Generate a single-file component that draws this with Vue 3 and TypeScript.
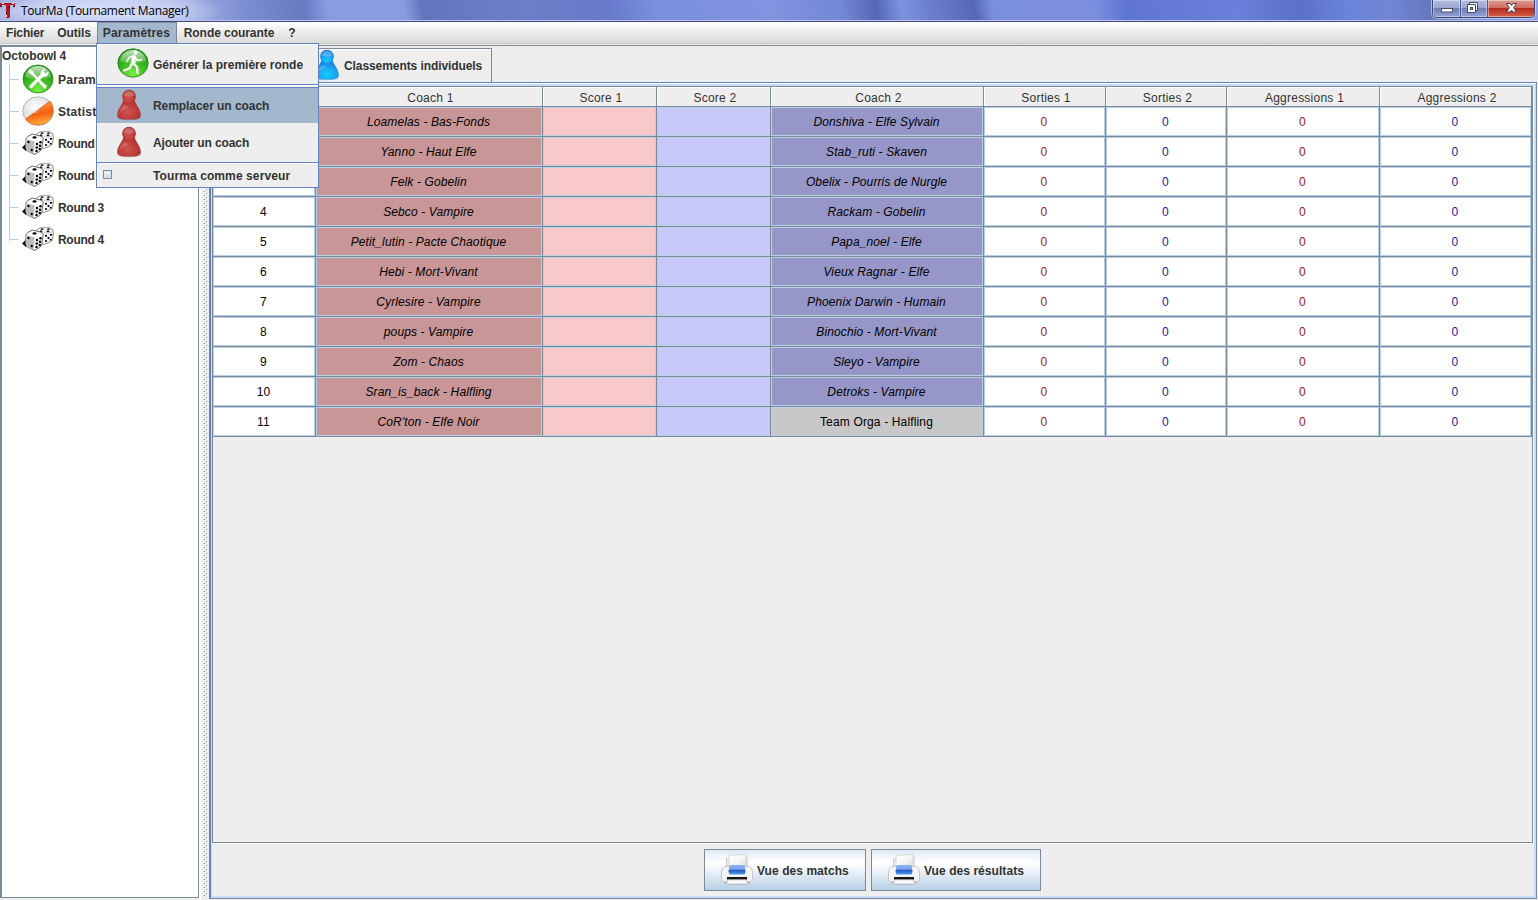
<script setup lang="ts">
interface Match {
  home: string
  away: string
  bye?: boolean
}

const menus: string[] = ['Fichier', 'Outils', 'Paramètres', 'Ronde courante', '?']
const headers: string[] = ['', 'Coach 1', 'Score 1', 'Score 2', 'Coach 2', 'Sorties 1', 'Sorties 2', 'Aggressions 1', 'Aggressions 2']
const rounds: string[] = ['Round 1', 'Round 2', 'Round 3', 'Round 4']
const printButtons: string[] = ['Vue des matchs', 'Vue des résultats']

const matches: Match[] = [
  { home: 'Loamelas - Bas-Fonds', away: 'Donshiva - Elfe Sylvain' },
  { home: 'Yanno - Haut Elfe', away: 'Stab_ruti - Skaven' },
  { home: 'Felk - Gobelin', away: 'Obelix - Pourris de Nurgle' },
  { home: 'Sebco - Vampire', away: 'Rackam - Gobelin' },
  { home: 'Petit_lutin - Pacte Chaotique', away: 'Papa_noel - Elfe' },
  { home: 'Hebi - Mort-Vivant', away: 'Vieux Ragnar - Elfe' },
  { home: 'Cyrlesire - Vampire', away: 'Phoenix Darwin - Humain' },
  { home: 'poups - Vampire', away: 'Binochio - Mort-Vivant' },
  { home: 'Zom - Chaos', away: 'Sleyo - Vampire' },
  { home: 'Sran_is_back - Halfling', away: 'Detroks - Vampire' },
  { home: "CoR'ton - Elfe Noir", away: 'Team Orga - Halfling', bye: true },
]
</script>

<template>
  <div class="window">
    <svg class="defs" width="0" height="0" aria-hidden="true">
      <defs>
        <radialGradient id="gGreen" cx="50%" cy="88%" r="85%">
          <stop offset="0" stop-color="#7df04a" />
          <stop offset="0.45" stop-color="#3fbf22" />
          <stop offset="1" stop-color="#178a12" />
        </radialGradient>
        <linearGradient id="gGloss" x1="0" y1="0" x2="0" y2="1">
          <stop offset="0" stop-color="#fff" stop-opacity="0.75" />
          <stop offset="1" stop-color="#fff" stop-opacity="0.15" />
        </linearGradient>
        <linearGradient id="gOrange" x1="0.3" y1="0" x2="0.5" y2="1">
          <stop offset="0" stop-color="#ff9a50" />
          <stop offset="0.55" stop-color="#f2600f" />
          <stop offset="1" stop-color="#ffb040" />
        </linearGradient>
        <radialGradient id="gSilver" cx="45%" cy="35%" r="70%">
          <stop offset="0" stop-color="#fff" />
          <stop offset="1" stop-color="#d2d2d2" />
        </radialGradient>
        <radialGradient id="gRed" cx="45%" cy="60%" r="65%">
          <stop offset="0" stop-color="#cf5450" />
          <stop offset="0.6" stop-color="#bd3c3a" />
          <stop offset="1" stop-color="#9c2c2c" />
        </radialGradient>
        <radialGradient id="gBlue" cx="50%" cy="75%" r="75%">
          <stop offset="0" stop-color="#12cdfa" />
          <stop offset="0.6" stop-color="#1b9cf0" />
          <stop offset="1" stop-color="#1a6fd0" />
        </radialGradient>
        <linearGradient id="gPrint" x1="0" y1="0" x2="0" y2="1">
          <stop offset="0" stop-color="#8fb0f0" />
          <stop offset="0.45" stop-color="#7aa2ee" />
          <stop offset="0.55" stop-color="#2459c0" />
          <stop offset="1" stop-color="#4d9cf0" />
        </linearGradient>
        <linearGradient id="gPaper" x1="0" y1="0" x2="1" y2="1">
          <stop offset="0" stop-color="#fff" />
          <stop offset="0.6" stop-color="#f4f4f4" />
          <stop offset="1" stop-color="#d8d8d8" />
        </linearGradient>
        <symbol id="pawn" viewBox="0 0 26 32">
          <ellipse cx="13" cy="29" rx="12" ry="2.2" fill="#000" opacity="0.22" />
          <path d="M7.500 11C6.500 16 1.200 19.500 1.200 26.200C1.200 29.500 6 30.600 13 30.600S24.800 29.500 24.800 26.200C24.800 19.500 19.500 16 18.500 11Z" fill="var(--pawn)" />
          <circle cx="13" cy="7.700" r="6.900" fill="var(--pawn)" />
          <path d="M7.500 6C8.500 2.800 11 1.700 13 1.700S17.500 2.800 18.500 6C16 8 10 8 7.500 6Z" fill="#fff" opacity="0.22" />
          <path d="M8.500 15.500C6 18 3.500 21.500 3.300 24C7 20 10 21 13 18C11 17.500 9.500 16.500 8.500 15.500Z" fill="#fff" opacity="0.16" />
        </symbol>
        <symbol id="die" viewBox="0 0 32 24">
          <path d="M0 16.500L4.500 12V20.500Z" fill="#111" />
          <path d="M14.500 4Q15.500 1.500 18 0.800L28 0.800Q31 2 31.500 5L30.500 13Q29 15.500 21 17.500L15 12Z" fill="#f6f6f6" stroke="#666" stroke-width="0.700" />
          <path d="M15.500 4.500L26.500 6L31 4.500" fill="none" stroke="#bbb" stroke-width="0.700" />
          <path d="M4 8Q5 5 10.500 3L20 5.500Q21.500 6.500 21 9L19.500 18.500Q18 21.500 12 23.400L5 19.500Q3.500 18 3.700 15Z" fill="#fff" stroke="#444" stroke-width="0.800" />
          <path d="M4 8L12.500 10.500L12 23L5 19.500Q3.500 18 3.700 15Z" fill="#bdbdbd" />
          <g fill="#000">
            <ellipse cx="12.500" cy="6.400" rx="2" ry="1.200" />
            <circle cx="6.500" cy="11" r="1.200" /><circle cx="9.700" cy="19" r="1.200" />
            <circle cx="15" cy="13" r="1.250" /><circle cx="18.500" cy="11.300" r="1.250" />
            <circle cx="14.700" cy="16.500" r="1.250" /><circle cx="18" cy="14.700" r="1.250" />
            <circle cx="14.500" cy="20" r="1.250" /><circle cx="17.700" cy="18" r="1.250" />
            <ellipse cx="20" cy="2.200" rx="1.400" ry="0.800" /><ellipse cx="26.500" cy="2.200" rx="1.400" ry="0.800" />
            <ellipse cx="19" cy="4.300" rx="1.300" ry="0.800" /><ellipse cx="26" cy="4.400" rx="1.400" ry="0.800" />
            <circle cx="24" cy="8.800" r="1.100" /><circle cx="29" cy="7.800" r="1.100" /><circle cx="26.500" cy="11" r="1.100" /><circle cx="24" cy="14" r="1.100" /><circle cx="28.700" cy="12.700" r="1" />
          </g>
        </symbol>
        <symbol id="printer" viewBox="0 0 32 32">
          <ellipse cx="16" cy="29" rx="13" ry="2" fill="#000" opacity="0.150" />
          <path d="M5.500 5H8.500V13H5.500Z" fill="#eee" stroke="#bbb" stroke-width="0.800" />
          <path d="M25 2V13H27V3Z" fill="#ddd" />
          <path d="M4 12.500H28Q31.500 14 31.500 18V25Q31.500 27.500 29 27.500H3Q0.500 27.500 0.500 25V18Q0.500 14 4 12.500Z" fill="#f5f5f5" stroke="#bdbdbd" stroke-width="0.800" />
          <path d="M8.300 1.300L25 0.500V13H7.500Z" fill="url(#gPaper)" stroke="#ccc" stroke-width="0.700" />
          <path d="M8.500 11H23.500L24.500 17.500Q24.500 20 22.500 20.500H9.500Q7.500 20 7.500 17.500Z" fill="url(#gPrint)" />
          <rect x="6" y="23" width="20" height="2.800" fill="#161616" />
          <path d="M6.500 25.800H25.500L26.500 30H5.500Z" fill="#fafafa" stroke="#bbb" stroke-width="0.700" />
        </symbol>
      </defs>
    </svg>

    <header class="titlebar">
      <svg class="logo" width="17" height="18" viewBox="0 0 17 18">
        <path d="M0 3H15V7H14L13 5H10V17L9 18H6V5H2L1 7H0Z" fill="#b31522" />
        <path d="M2 3.500H4M12 3.500H14M6.500 15V17" stroke="#fff" stroke-width="1" />
        <path d="M0 6.500H2M13 6.500H15M9.500 6V9M6.500 12V14" stroke="#301018" stroke-width="1" />
      </svg>
      <span class="title">TourMa (Tournament Manager)</span>
      <div class="controls">
        <span class="control minimize"><svg width="27" height="17" viewBox="0 0 27 17"><rect x="8.500" y="8.500" width="11" height="3.500" fill="#fff" stroke="#484e68" /></svg></span>
        <span class="control restore"><svg width="26" height="17" viewBox="0 0 26 17"><path d="M8.500 2.500H16.500V10.500H8.500Z" fill="#fff" stroke="#484e68" /><path d="M6.500 4.500H14.500V12.500H6.500Z" fill="#fff" stroke="#484e68" /><rect x="9.500" y="7.500" width="2" height="2" fill="#8b96c4" stroke="#484e68" /></svg></span>
        <span class="control close"><svg width="47" height="17" viewBox="0 0 47 17"><path d="M18.500 3.500H22L23.500 5.500L25 3.500H28.500L25.600 7.700L28.500 12H25L23.500 10L22 12H18.500L21.400 7.700Z" fill="#fff" stroke="#533f55" /></svg></span>
      </div>
    </header>

    <nav class="menubar">
      <span v-for="m in menus" :key="m" class="menu" :class="{ open: m === 'Paramètres' }">{{ m }}</span>
    </nav>

    <div class="workspace">
      <aside class="tree">
        <div class="root">Octobowl 4</div>
        <div class="branch">
          <div class="node wide">
            <svg width="32" height="30" viewBox="0 0 32 30">
              <ellipse cx="16" cy="15" rx="15" ry="14" fill="url(#gGreen)" stroke="#28891f" stroke-width="0.800" />
              <path d="M3 13C4 6 9 2 16 2S28 6 29 13C21 16 11 16 3 13Z" fill="url(#gGloss)" />
              <path d="M9 8L21.500 21" stroke="#fff" stroke-width="2.400" />
              <path d="M7 5.500L10 6L12 10L10 11L6.500 8.500Z" fill="#fff" />
              <path d="M18.500 17L25 22L23 25L17 19Z" fill="#fff" />
              <path d="M9 22.500L20 11.500" stroke="#fff" stroke-width="3.400" stroke-linecap="round" />
              <path d="M24 4.500L21.500 7.500L23.500 9.500L26.500 7.500C27 11.500 23 14 20 12.500C17 10 19 5 24 4.500Z" fill="#fff" />
            </svg>
            <span>Paramètres</span>
          </div>
          <div class="node wide">
            <svg width="32" height="30" viewBox="0 0 32 30">
              <ellipse cx="16" cy="15" rx="15.200" ry="14.200" fill="url(#gSilver)" stroke="#a5a5a5" stroke-width="0.800" />
              <path d="M28 5C34 13 31 23 24 27C17 31 7 29 3.500 23Z" fill="url(#gOrange)" stroke="#d85a1a" stroke-width="0.600" />
              <path d="M16 1V15M1.500 16H15" stroke="#ddd" stroke-width="0.700" />
            </svg>
            <span>Statistiques</span>
          </div>
          <div v-for="r in rounds" :key="r" class="node">
            <svg width="32" height="24"><use href="#die" /></svg>
            <span>{{ r }}</span>
          </div>
        </div>
      </aside>

      <div class="splitter">
        <svg width="5" height="850">
          <defs>
            <pattern id="bumps" width="5" height="4" patternUnits="userSpaceOnUse">
              <rect x="0" y="0" width="1" height="1" fill="#fff" /><rect x="1" y="1" width="1" height="1" fill="#7a8a99" />
              <rect x="2" y="2" width="1" height="1" fill="#fff" /><rect x="3" y="3" width="1" height="1" fill="#7a8a99" />
            </pattern>
          </defs>
          <rect width="5" height="850" fill="url(#bumps)" />
        </svg>
      </div>

      <main class="main">
        <div class="tabs">
          <div class="tab">
            <svg class="blue-pawn" width="26" height="32"><use href="#pawn" /></svg>
            <span>Classements individuels</span>
          </div>
        </div>
        <section class="pane">
          <div class="scroll">
            <div class="grid">
              <div v-for="(h, i) in headers" :key="i" class="head">{{ h }}</div>
              <template v-for="(m, i) in matches" :key="m.home">
                <div class="cell">{{ i + 1 }}</div>
                <div class="cell home">{{ m.home }}</div>
                <div class="cell score-home"></div>
                <div class="cell score-away"></div>
                <div class="cell" :class="m.bye ? 'bye' : 'away'">{{ m.away }}</div>
                <div class="cell red">0</div>
                <div class="cell blue">0</div>
                <div class="cell red">0</div>
                <div class="cell blue">0</div>
              </template>
            </div>
          </div>
          <footer class="actions">
            <button v-for="b in printButtons" :key="b" class="action">
              <svg width="32" height="32"><use href="#printer" /></svg>
              <span>{{ b }}</span>
            </button>
          </footer>
        </section>
      </main>
    </div>

    <div class="popup">
      <div class="item first">
        <svg width="32" height="30" viewBox="0 0 32 30">
          <ellipse cx="16" cy="15" rx="15.200" ry="14.200" fill="url(#gGreen)" stroke="#28891f" stroke-width="0.800" />
          <path d="M3 13C4 6 9 2 16 2S28 6 29 13C21 16 11 16 3 13Z" fill="url(#gGloss)" />
          <ellipse cx="18.500" cy="4.500" rx="1.900" ry="2.300" fill="#fff" />
          <path d="M16.500 15.500L20 19L20.500 25M15 15.500L12.500 20.500L7 22.500" fill="none" stroke="#fff" stroke-width="2.300" stroke-linejoin="round" stroke-linecap="round" />
          <path d="M16.500 8L12 9.500L10 13.500M18 9L20.500 12.500L24.500 11.500" fill="none" stroke="#fff" stroke-width="1.600" stroke-linejoin="round" stroke-linecap="round" />
          <path d="M15 7.500L19 7.500L18.300 16.500L14 16.500Z" fill="#fff" />
        </svg>
        <span>Générer la première ronde</span>
      </div>
      <div class="separator double"></div>
      <div class="item selected">
        <svg class="red-pawn" width="26" height="32"><use href="#pawn" /></svg>
        <span>Remplacer un coach</span>
      </div>
      <div class="item add">
        <svg class="red-pawn" width="26" height="32"><use href="#pawn" /></svg>
        <span>Ajouter un coach</span>
      </div>
      <div class="separator"></div>
      <div class="item check">
        <i class="box"></i>
        <span>Tourma comme serveur</span>
      </div>
    </div>
  </div>
</template>

<style>
body { margin: 0; overflow: hidden; }
</style>

<style scoped>
* { box-sizing: border-box; }
.window {
  position: relative; width: 1538px; height: 900px; overflow: hidden; background: #eee;
  font: bold 12px/14px "Liberation Sans", Arial, sans-serif; color: #333;
  display: flex; flex-direction: column; white-space: nowrap;
}
.defs { position: absolute; }
svg { display: block; flex: none; }

.titlebar {
  height: 22px; flex: none; display: flex; align-items: flex-start; overflow: hidden;
  border-bottom: 1px solid #424a78; box-shadow: inset 0 -1px #bcc4ee;
  background:
    radial-gradient(ellipse 125px 22px at 100px 11px, rgba(235, 240, 255, 0.75) 0, rgba(220, 228, 252, 0.6) 60%, transparent 100%),
    linear-gradient(80deg, #9aa9dc 0, #a5b2e4 180px, #7f8fd3 240px, #6878c0 300px, #8b9be2 325px, #8b9be2 400px, #6375bc 418px, #6c80c8 520px, #6679ca 600px, #7b90df 650px, #8094e0 760px, #7388d6 830px, #5668b5 865px, #7d93e0 890px, #6a7dcc 920px, #5767b8 962px, #7a8fde 980px, #7c8fde 1080px, #5f75d2 1110px, #6a80da 1220px, #5b70c8 1280px, #6b84da 1330px, #7186d4 1370px, #6678be 1410px, #7e8fda 1450px, #98a6e6 1538px);
}
.logo { margin-right: 4px; }
.title { font: 12px/16px "Open Sans", "Noto Sans", sans-serif; color: #000; margin-top: 3px; letter-spacing: -0.32px; }
.controls {
  margin-left: auto; margin-right: 3px; display: flex; height: 18px; width: 103px;
  border: 1px solid #3c4470; border-top: 0; border-radius: 0 0 5px 5px; overflow: hidden;
  box-shadow: 0 0 0 1px rgba(220, 228, 255, 0.6);
}
.control { height: 17px; box-shadow: inset 0 0 0 1px rgba(255, 255, 255, 0.4); background: linear-gradient(#b4bddf 0, #9aa6d4 45%, #717fb5 50%, #95a3d8 100%); }
.minimize, .restore { border-right: 1px solid #4c5688; }
.minimize { width: 28px; }
.restore { width: 27px; }
.close { flex: 1; background: linear-gradient(#dc9c94 0, #cf6d60 45%, #b32c1c 50%, #d8604c 100%); }

.menubar { height: 23px; flex: none; display: flex; padding-bottom: 2px; background: linear-gradient(#fff 0, #dadada 21px, #c8c8c8 21px, #c8c8c8 22px, #eee 22px); }
.menu { padding: 4px 7px 0 7px; height: 21px; letter-spacing: -0.05px; }
.menu:nth-child(1) { padding-left: 6px; padding-right: 6px; letter-spacing: -0.15px; }
.menu:nth-child(2) { padding-left: 7px; padding-right: 6px; letter-spacing: -0.1px; }
.menu.open { width: 80px; background: #a3b8cc; padding: 3px 0 0 5px; border: 1px solid #7a8a99; border-bottom: 0; letter-spacing: 0.2px; }

.workspace { flex: 1; display: flex; min-height: 0; border-top: 1px solid #7a8a99; }
.tree { width: 199px; height: 852px; flex: none; background: #fff; border: 1px solid #7a8a99; border-left-width: 2px; padding-top: 2px; }
.root { height: 14px; line-height: 15px; letter-spacing: -0.05px; }
.branch { position: relative; padding-left: 7px; }
.branch::before { content: ""; position: absolute; left: 7px; top: 1px; width: 1px; height: 177px; background: #b8cfe5; }
.node { height: 32px; display: flex; align-items: center; gap: 4px; letter-spacing: -0.3px; }
.node.wide { letter-spacing: 0.25px; }
.node.wide svg { margin-top: -1px; }
.node span { padding-top: 1px; }
.node::before { content: ""; width: 10px; height: 1px; background: #b8cfe5; margin-right: -1px; }

.splitter { width: 10px; flex: none; padding: 0 0 0 4px; box-shadow: inset 2px 0 #fff; }

.main { width: 1328px; flex: none; display: flex; flex-direction: column; }
.tabs { height: 36px; display: flex; padding-top: 2px; }
.tab { margin-left: 91px; width: 192px; border: 1px solid #7a8a99; border-bottom: 0; display: flex; align-items: center; padding-left: 13px; gap: 4px; box-shadow: inset 0 1px #fff; letter-spacing: -0.08px; }
.blue-pawn { --pawn: url(#gBlue); margin-top: -2px; }
.red-pawn { --pawn: url(#gRed); }
.pane { height: 817px; border: 2px solid #6382bf; border-top-width: 1px; border-right: 1px solid #7a8a99; border-bottom: 1px solid #7a8a99; box-shadow: inset 0 1px #fff, inset 0 3px #c8ddf2, inset 1px 0 #c8ddf2, inset -2px -2px #c8ddf2; padding: 3px 3px 2px 1px; display: flex; flex-direction: column; }
.scroll { height: 757px; border: 1px solid #7a8a99; box-shadow: 0 1px #fff, 1px 0 #fff; }
.grid { display: grid; width: 1319px; grid-template-columns: 103px 227px 114px 114px 213px 122px 121px 153px 152px; grid-template-rows: 20px; grid-auto-rows: 30px; font-weight: normal; color: #000; }
.head, .cell { text-align: center; border-right: 1px solid #7a8a99; border-bottom: 1px solid #7a8a99; }
.head { color: #333; line-height: 22px; padding-left: 3px; letter-spacing: 0.24px; box-shadow: inset 1px 1px #fff; }
.cell { line-height: 30px; padding-right: 1px; letter-spacing: 0.15px; background: #fff; box-shadow: inset 0 0 0 1px #b8cfe5; }
.home { background: #c89696; font-style: italic; letter-spacing: 0.12px; }
.away { background: #9696c8; font-style: italic; letter-spacing: 0.12px; }
.bye { background: #c8c8c8; }
.score-home { background: #f9c8c8; }
.score-away { background: #c8c8f9; }
.red { color: #96202c; }
.blue { color: #2020a0; }

.actions { display: flex; justify-content: center; gap: 5px; padding-top: 6px; }
.action { height: 42px; width: 162px; border: 1px solid #7a8a99; padding: 0 0 0 16px; font: inherit; color: inherit; letter-spacing: 0.06px; display: flex; align-items: center; gap: 4px; background: linear-gradient(#dde8f3 0, #fff 30%, #fff 35%, #b8cfe5 100%); }
.action span { padding-top: 2px; }
.action + .action { width: 170px; }

.popup { position: absolute; left: 96px; top: 43px; width: 223px; height: 145px; background: #eee; border: 1px solid #6382bf; box-shadow: inset 1px 1px #fff; display: flex; flex-direction: column; }
.item { display: flex; align-items: center; padding-left: 20px; gap: 4px; letter-spacing: -0.06px; }
.item span { margin-top: 1px; }
.first { height: 40px; letter-spacing: 0; }
.first svg { margin-top: -2px; }
.selected { height: 35px; background: #a3b8cc; }
.selected svg { margin-top: -2px; }
.add { height: 39px; letter-spacing: -0.12px; }
.add svg { margin-top: -2px; }
.red-pawn { margin-left: -1px; margin-right: 7px; }
.separator { height: 2px; border-top: 1px solid #6382bf; background: #fff; }
.separator.double { height: 4px; border-bottom: 1px solid #6382bf; }
.check { height: 23px; padding-left: 6px; gap: 41px; letter-spacing: 0.1px; }
.box { width: 9px; height: 9px; margin-top: -2px; border: 1px solid #7a8a99; background: linear-gradient(#fff, #b8cfe5); box-shadow: inset 0 0 0 1px #dde8f3; }
</style>
